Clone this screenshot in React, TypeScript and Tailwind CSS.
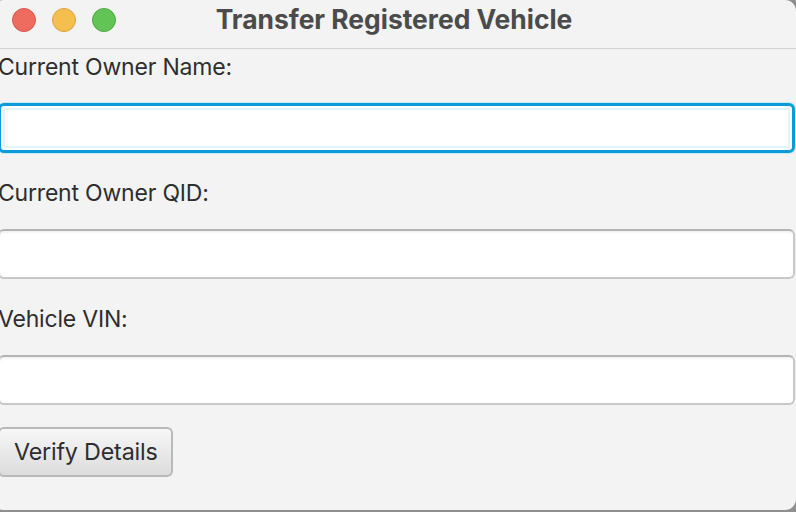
import React from "react";

const font = { fontFamily: "Inter, 'Noto Sans', sans-serif" };

function Field({ focused }: { focused?: boolean }) {
    if (focused) {
        return (
            <div className="h-[50px] rounded-[6px] border-[3px] border-[#0a9bd8] bg-white p-[2px] shadow-[0_0_0_1px_#c9e9f7]">
                <div className="h-full w-full rounded-[3px] bg-white shadow-[inset_0_0_0_2px_#e2f3fb]" />
            </div>
        );
    }
    return (
        <div className="h-[50px] rounded-[6px] border-2 border-[#c8c8c8] border-t-[#b4b4b4] bg-white shadow-[inset_0_3px_3px_-2px_rgba(0,0,0,0.08)]" />
    );
}

export default function App() {
    const labels = ["Current Owner Name:", "Current Owner QID:", "Vehicle VIN:"];

    return (
        <div className="w-[796px] h-[512px] overflow-hidden bg-[#8f8f8f]" style={font}>
            <div className="-ml-[8px] w-[804px] h-[510px] rounded-[11px] bg-[#f3f3f3] flex flex-col">
                <div className="h-[49px] shrink-0 border-b border-[#d2d2d2] flex items-center relative">
                    <div className="flex items-center gap-[16px] pl-[20px] -mt-[8px]">
                        <span className="w-[24px] h-[24px] rounded-full bg-[#ee6b5f] border border-[#d8574c]" />
                        <span className="w-[24px] h-[24px] rounded-full bg-[#f5bf4f] border border-[#d9a23b]" />
                        <span className="w-[24px] h-[24px] rounded-full bg-[#61c454] border border-[#4ea843]" />
                    </div>
                    <div className="absolute left-0 right-0 top-[3px] text-center text-[26.4px] leading-[32px] font-bold text-[#4b4b4b]">
                        Transfer Registered Vehicle
                    </div>
                </div>

                <div className="pl-[6px] pr-[1px] pt-[2px] flex flex-col">
                    {labels.map((label, i) => (
                        <div key={label} className={i > 0 ? "mt-[24px]" : ""}>
                            <div className="pt-[2px] text-[23px] leading-[28px] text-[#2e2e2e] tracking-[-0.2px]">{label}</div>
                            <div className="mt-[22px]">
                                <Field focused={i === 0} />
                            </div>
                        </div>
                    ))}

                    <div className="mt-[22px]">
                        <button className="h-[50px] w-[175px] rounded-[6px] border-2 border-[#b9b9b9] bg-gradient-to-b from-[#f7f7f7] to-[#dcdcdc] text-left pl-[14px] text-[23.3px] text-[#2e2e2e] tracking-[-0.2px]">
                            Verify Details
                        </button>
                    </div>
                </div>
            </div>
        </div>
    );
}
